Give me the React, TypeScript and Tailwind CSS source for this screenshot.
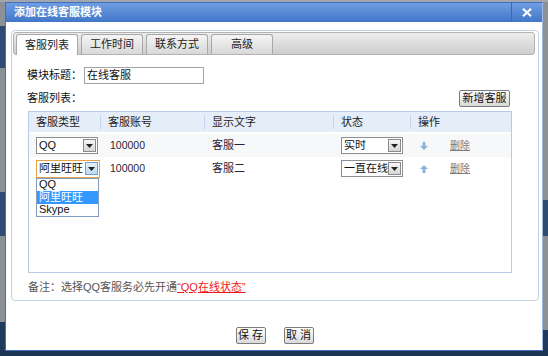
import React from "react";

function Tri() {
  return (
    <svg width="7" height="4" viewBox="0 0 7 4">
      <polygon points="0,0 7,0 3.5,4" fill="#222" />
    </svg>
  );
}

function Select({ value, width, focused = false, latin = false }: { value: string; width: string; focused?: boolean; latin?: boolean }) {
  return (
    <div
      className={`${width} flex items-center justify-between bg-white ${
        focused ? "h-[18px] border border-[#e2a245]" : "h-[17px] border border-[#8e8e8e]"
      }`}
    >
      <span className={`pl-[2px] ${latin ? "text-[11px]" : "text-[11px]"} leading-none text-[#111] whitespace-nowrap overflow-hidden`}>{value}</span>
      <span
        className={`mr-[1px] flex h-[13px] w-[13px] shrink-0 items-center justify-center border ${
          focused
            ? "border-[#6f9fd3] bg-gradient-to-b from-[#e4f0fb] to-[#bcd8f2]"
            : "border-[#8a8a8a] bg-gradient-to-b from-[#f7f7f7] to-[#d6d6d6]"
        }`}
      >
        <Tri />
      </span>
    </div>
  );
}

function Arrow({ up }: { up: boolean }) {
  return (
    <svg width="8" height="8" viewBox="0 0 8 8">
      {up ? (
        <>
          <polygon points="0,4 8,4 4,0" fill="#8db3de" />
          <rect x="2.5" y="4" width="3" height="4" fill="#8db3de" />
        </>
      ) : (
        <>
          <rect x="2.5" y="0" width="3" height="4" fill="#8db3de" />
          <polygon points="0,4 8,4 4,8" fill="#8db3de" />
        </>
      )}
    </svg>
  );
}

function Btn({ children, w }: { children: React.ReactNode; w: string }) {
  return (
    <div
      className={`${w} flex h-[17px] items-center justify-center rounded-[2px] border border-[#7b7b7b] bg-gradient-to-b from-[#ffffff] to-[#d9d9d9] text-[11px] leading-none text-[#111] whitespace-pre`}
    >
      {children}
    </div>
  );
}

export default function App() {
  const tabs = ["客服列表", "工作时间", "联系方式", "高级"];
  return (
    <div className="relative h-[356px] w-[548px] overflow-hidden bg-[#8c9198] text-[11px] font-['Liberation_Sans','Noto_Sans_CJK_SC',sans-serif]">
      {/* desktop background pieces */}
      <div className="absolute left-0 top-0 h-[2px] w-full bg-[#a3a6aa]" />
      <div className="absolute left-0 top-[26px] h-[42px] w-[6px] bg-[#2e4c72]" />
      <div className="absolute left-0 top-[192px] h-[44px] w-[6px] bg-[#2e4c72]" />
      <div className="absolute left-0 top-[322px] h-[34px] w-[6px] bg-[#1f3a5d]" />
      <div className="absolute right-0 top-[200px] h-[36px] w-[6px] bg-[#2e4c72]" />
      <div className="absolute right-0 top-[330px] h-[26px] w-[6px] bg-[#1f3a5d]" />
      <div className="absolute left-0 top-[350px] h-[6px] w-full bg-[#1c3354]" />

      {/* dialog window */}
      <div className="absolute left-[5px] top-[2px] flex h-[349px] w-[538px] flex-col border border-[#3f6fbe] border-r-[#9fbbe0] bg-white">
        {/* title bar */}
        <div className="flex h-[19px] shrink-0 items-stretch justify-between bg-gradient-to-b from-[#6f9de2] to-[#4177c9]">
          <div className="flex items-center pl-[8px] text-[11px] font-bold leading-none text-white">添加在线客服模块</div>
          <div className="flex w-[31px] items-center justify-center border-l border-[#3a68b4]">
            <svg width="10" height="9" viewBox="0 0 10 9">
              <path d="M1 0.8 L9 8.2 M9 0.8 L1 8.2" stroke="#ffffff" strokeWidth="2.2" />
            </svg>
          </div>
        </div>

        {/* body */}
        <div className="flex flex-1 flex-col pl-[5px] pt-[8px]">
          <div className="flex h-[271px] w-[528px] flex-col rounded-[4px] border border-[#c3d1e1] p-[1px]">
            {/* tab bar */}
            <div className="flex h-[23px] w-[522px] items-end gap-[3px] rounded-[3px] border border-[#b3b3b3] bg-gradient-to-b from-[#ededed] to-[#cdcdcd] pl-[2px]">
              {tabs.map((t, i) => (
                <div
                  key={t}
                  className={`flex w-[62px] items-center justify-center rounded-t-[3px] border border-b-0 border-[#a8a8a8] text-[11px] leading-none text-[#222] ${
                    i === 0 ? "-mb-[1px] h-[21px] bg-white" : "h-[20px] bg-gradient-to-b from-[#f5f5f5] to-[#d8d8d8]"
                  }`}
                >
                  {t}
                </div>
              ))}
            </div>

            {/* content */}
            <div className="ml-[14px] flex w-[485px] flex-col pt-[12px]">
              <div className="flex items-center">
                <span className="w-[57px] shrink-0 whitespace-nowrap text-[11px] leading-none text-[#111]">模块标题：</span>
                <div className="flex h-[17px] w-[120px] items-center border border-[#a3a3a3] pl-[2px] text-[11px] leading-none text-[#111]">
                  在线客服
                </div>
              </div>

              <div className="mt-[6px] flex items-center justify-between pr-[2px]">
                <span className="whitespace-nowrap text-[11px] leading-none text-[#111]">客服列表：</span>
                <Btn w="w-[51px]">新增客服</Btn>
              </div>

              {/* table */}
              <div className="ml-[1px] mt-[4px] flex h-[162px] flex-col border border-[#b8cbe5]">
                <div className="grid h-[20px] grid-cols-[71px_104px_129px_77px_1fr] items-center bg-[#e5edf8] text-[11px] leading-none text-[#222]">
                  <div className="pl-[7px]">客服类型</div>
                  <div className="flex items-center"><span className="h-[14px] w-px bg-[#c3d4ea]" /><span className="pl-[7px]">客服账号</span></div>
                  <div className="flex items-center"><span className="h-[14px] w-px bg-[#c3d4ea]" /><span className="pl-[7px]">显示文字</span></div>
                  <div className="flex items-center"><span className="h-[14px] w-px bg-[#c3d4ea]" /><span className="pl-[7px]">状态</span></div>
                  <div className="flex items-center"><span className="h-[14px] w-px bg-[#c3d4ea]" /><span className="pl-[7px]">操作</span></div>
                </div>

                <div className="flex flex-col pt-[2px]">
                  <div className="grid h-[23px] grid-cols-[71px_104px_129px_77px_1fr] items-center bg-[#f7f8fa] text-[11px] leading-none text-[#2a2438]">
                    <div className="pl-[7px]"><Select value="QQ" width="w-[62px]" latin /></div>
                    <div className="pl-[10px] text-[10.5px]">100000</div>
                    <div className="pl-[8px]">客服一</div>
                    <div className="pl-[8px]"><Select value="实时" width="w-[62px]" /></div>
                    <div className="flex items-center pl-[10px]">
                      <Arrow up={false} />
                      <span className="ml-[22px] text-[10px] text-[#7a7a7a] underline">删除</span>
                    </div>
                  </div>

                  <div className="grid h-[23px] grid-cols-[71px_104px_129px_77px_1fr] items-center text-[11px] leading-none text-[#2a2438]">
                    <div className="relative pl-[7px]">
                      <Select value="阿里旺旺" width="w-[64px]" focused />
                      <div className="absolute left-[7px] top-[18px] z-10 flex w-[63px] flex-col border border-[#7f9cc0] bg-white text-[11px] leading-none text-[#111]">
                        <div className="flex h-[12px] items-center pl-[2px]">QQ</div>
                        <div className="flex h-[13px] items-center bg-[#3399ff] pl-[2px] text-white">阿里旺旺</div>
                        <div className="flex h-[12px] items-center pl-[2px]">Skype</div>
                      </div>
                    </div>
                    <div className="pl-[10px] text-[10.5px]">100000</div>
                    <div className="pl-[8px]">客服二</div>
                    <div className="pl-[8px]"><Select value="一直在线" width="w-[62px]" /></div>
                    <div className="flex items-center pl-[10px]">
                      <Arrow up />
                      <span className="ml-[22px] text-[10px] text-[#7a7a7a] underline">删除</span>
                    </div>
                  </div>
                </div>
              </div>

              <div className="ml-[1px] mt-[9px] flex items-center whitespace-nowrap text-[11px] leading-none">
                <span className="text-[#555]">备注：选择QQ客服务必先开通</span>
                <span className="text-[#f01818] underline">“QQ在线状态”</span>
              </div>
            </div>
          </div>

          <div className="mt-[26px] flex justify-center gap-[18px] pr-[4px]">
            <Btn w="w-[30px]">保 存</Btn>
            <Btn w="w-[30px]">取 消</Btn>
          </div>
        </div>
      </div>
    </div>
  );
}
